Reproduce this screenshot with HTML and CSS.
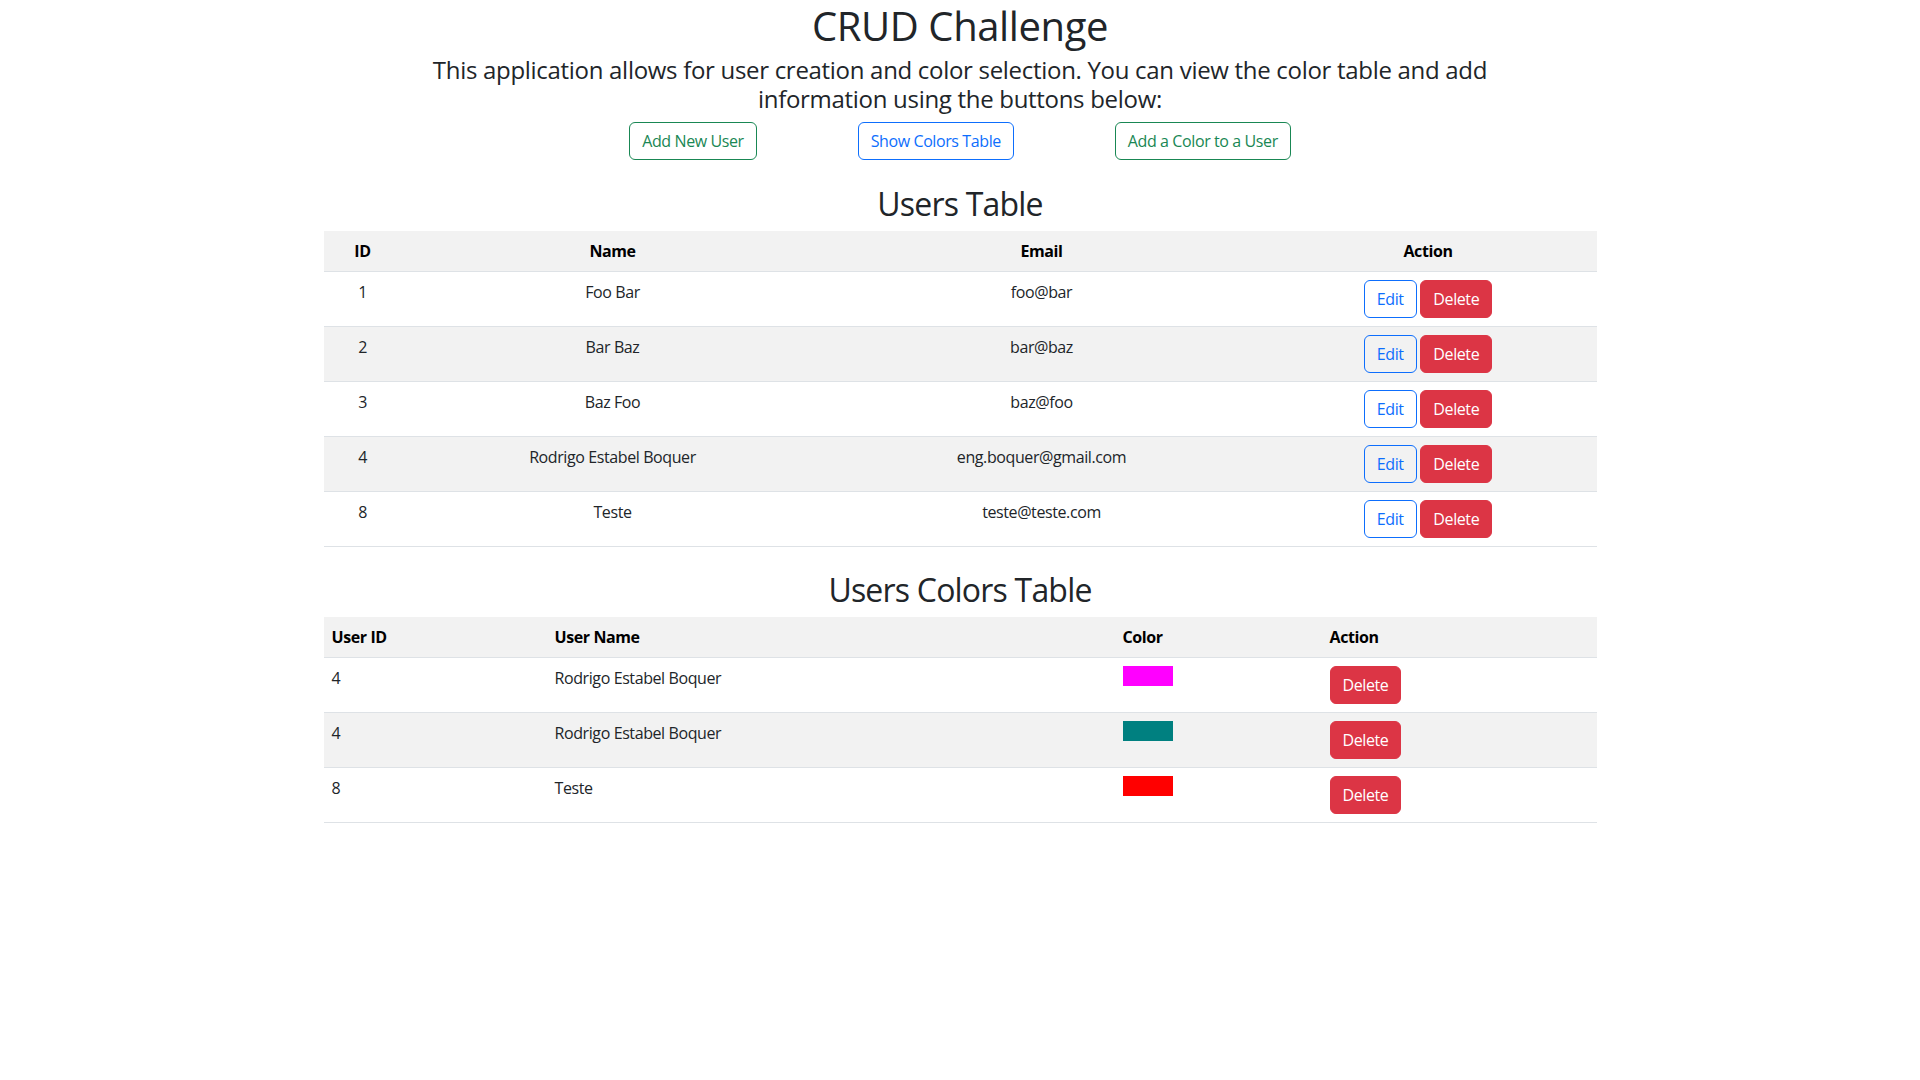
FILE: index.html
```html
<!DOCTYPE html>
<html lang="en">
<head>
<meta charset="utf-8">
<title>CRUD Challenge</title>
<link rel="stylesheet" href="styles.css">
</head>
<body>
<div class="page">
  <h1 class="title">CRUD Challenge</h1>
  <h4 class="intro">This application allows for user creation and color selection. You can view the color table and add information using the buttons below:</h4>
  <div class="actions">
    <button class="btn btn-outline-success">Add New User</button>
    <button class="btn btn-outline-primary">Show Colors Table</button>
    <button class="btn btn-outline-success">Add a Color to a User</button>
  </div>

  <h2 class="section-title">Users Table</h2>
  <table class="table users">
    <thead>
      <tr><th class="c-id">ID</th><th class="c-name">Name</th><th class="c-email">Email</th><th class="c-action">Action</th></tr>
    </thead>
    <tbody>
      <tr><td>1</td><td>Foo Bar</td><td>foo@bar</td><td><button class="btn btn-outline-primary">Edit</button> <button class="btn btn-danger">Delete</button></td></tr>
      <tr><td>2</td><td>Bar Baz</td><td>bar@baz</td><td><button class="btn btn-outline-primary">Edit</button> <button class="btn btn-danger">Delete</button></td></tr>
      <tr><td>3</td><td>Baz Foo</td><td>baz@foo</td><td><button class="btn btn-outline-primary">Edit</button> <button class="btn btn-danger">Delete</button></td></tr>
      <tr><td>4</td><td>Rodrigo Estabel Boquer</td><td>eng.boquer@gmail.com</td><td><button class="btn btn-outline-primary">Edit</button> <button class="btn btn-danger">Delete</button></td></tr>
      <tr><td>8</td><td>Teste</td><td>teste@teste.com</td><td><button class="btn btn-outline-primary">Edit</button> <button class="btn btn-danger">Delete</button></td></tr>
    </tbody>
  </table>

  <h2 class="section-title second">Users Colors Table</h2>
  <table class="table colors">
    <thead>
      <tr><th class="k-id">User ID</th><th class="k-name">User Name</th><th class="k-color">Color</th><th class="k-action">Action</th></tr>
    </thead>
    <tbody>
      <tr><td>4</td><td>Rodrigo Estabel Boquer</td><td><div class="swatch" style="background:#ff00ff"></div></td><td><button class="btn btn-danger">Delete</button></td></tr>
      <tr><td>4</td><td>Rodrigo Estabel Boquer</td><td><div class="swatch" style="background:#008080"></div></td><td><button class="btn btn-danger">Delete</button></td></tr>
      <tr><td>8</td><td>Teste</td><td><div class="swatch" style="background:#ff0000"></div></td><td><button class="btn btn-danger">Delete</button></td></tr>
    </tbody>
  </table>
</div>
</body>
</html>
```
FILE: styles.css
```css
* { box-sizing: border-box; }
html, body { margin: 0; padding: 0; background: #fff; }
body {
  font-family: "Open Sans", "Noto Sans", "Liberation Sans", sans-serif;
  font-size: 16px;
  line-height: 1.5;
  color: #212529;
  letter-spacing: -0.4px;
}
.page {
  width: 1273px;
  margin: 0 auto;
  padding-top: 2px;
  text-align: center;
}
.title {
  margin: 0 0 6px;
  font-size: 40px;
  font-weight: 500;
  line-height: 1.2;
  letter-spacing: -0.4px;
}
.intro {
  margin: 0 auto 8px;
  max-width: 1110px;
  font-size: 24px;
  font-weight: 500;
  line-height: 1.2;
  letter-spacing: -0.3px;
}
.actions {
  display: flex;
  justify-content: center;
  gap: 101px;
  margin-bottom: 25px;
}
.btn {
  display: inline-block;
  font-family: inherit;
  font-size: 16px;
  letter-spacing: -0.4px;
  line-height: 24px;
  padding: 6px 12px;
  border: 1px solid transparent;
  border-radius: 6px;
  background: transparent;
  cursor: pointer;
  vertical-align: middle;
}
.btn-outline-success { color: #198754; border-color: #198754; }
.btn-outline-primary { color: #0d6efd; border-color: #0d6efd; }
.btn-danger { color: #fff; background: #dc3545; border-color: #dc3545; }
.section-title {
  margin: 0 0 8px;
  font-size: 32px;
  font-weight: 500;
  line-height: 1.2;
  letter-spacing: -0.8px;
}
.section-title.second { margin-top: 24px; }
.table {
  width: 100%;
  border-collapse: collapse;
  table-layout: fixed;
}
.table th, .table td {
  padding: 8px;
  border-bottom: 1px solid #dee2e6;
  vertical-align: top;
}
.table th { font-weight: 700; color: #000; }
.table thead tr { background: #f2f2f2; }
.table tbody tr:nth-child(even) { background: #f2f2f2; }
.users th, .users td { text-align: center; }
.c-id { width: 78px; }
.c-name { width: 422px; }
.c-email { width: 436px; }
.c-action { width: 337px; }
.colors th, .colors td { text-align: left; }
.k-id { width: 223px; }
.k-name { width: 568px; }
.k-color { width: 207px; }
.k-action { width: 275px; }
.swatch { width: 50px; height: 20px; }
```
